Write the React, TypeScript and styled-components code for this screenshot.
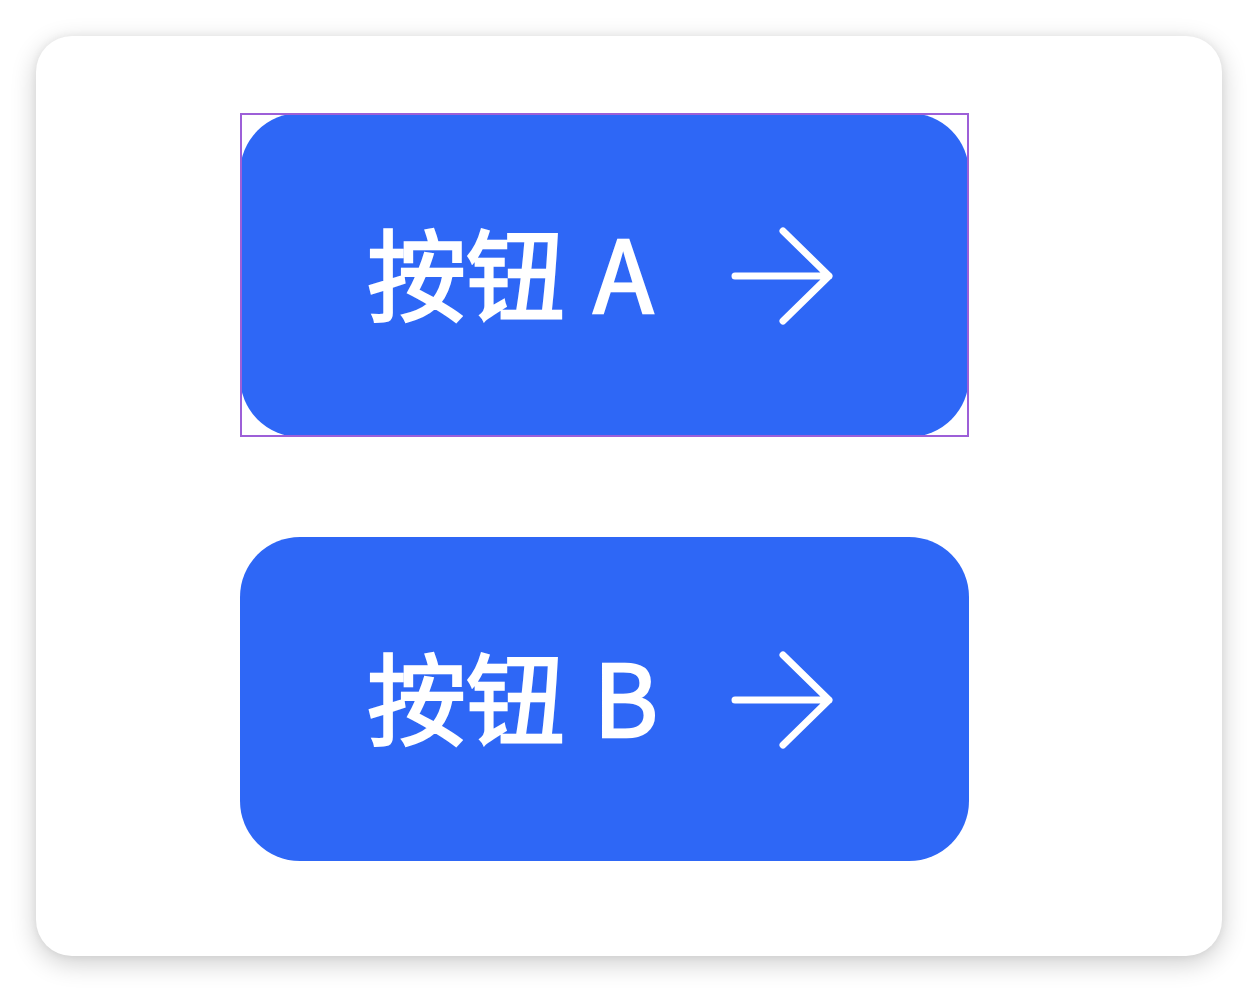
import React from 'react';
import styled, { createGlobalStyle } from 'styled-components';

const GlobalStyle = createGlobalStyle`
  html, body {
    margin: 0;
    padding: 0;
    background: #ffffff;
  }

  body {
    font-family: "Noto Sans CJK SC", "Noto Sans", sans-serif;
  }
`;

interface ButtonItem {
  label: string;
  selected?: boolean;
}

const BUTTONS: ButtonItem[] = [
  { label: '按钮 A', selected: true },
  { label: '按钮 B' },
];

const ArrowIcon: React.FC = () => (
  <svg width="106" height="100" viewBox="0 0 106 100" fill="none">
    <path
      d="M6 50H100M54 5L100 50L54 95"
      stroke="#ffffff"
      strokeWidth="7"
      strokeLinecap="round"
      strokeLinejoin="round"
    />
  </svg>
);

const App: React.FC = () => {
  return (
    <Page>
      <GlobalStyle />
      <Card>
        {BUTTONS.map((btn) => (
          <Frame key={btn.label} $selected={btn.selected}>
            <ActionButton>
              <Label>{btn.label}</Label>
              <ArrowIcon />
            </ActionButton>
          </Frame>
        ))}
      </Card>
    </Page>
  );
};

export default App;

const Page = styled.div`
  width: 1258px;
  height: 992px;
  padding: 36px;
  box-sizing: border-box;
`;

const Card = styled.div`
  width: 1186px;
  height: 920px;
  box-sizing: border-box;
  padding: 77px 0 0 204px;
  display: flex;
  flex-direction: column;
  align-items: flex-start;
  gap: 100px;
  background: #ffffff;
  border-radius: 36px;
  box-shadow: 0 7px 26px rgba(0, 0, 0, 0.2), 0 0 8px rgba(0, 0, 0, 0.06);
`;

/* square selection box drawn over the selected button */
const Frame = styled.div<{ $selected?: boolean }>`
  position: relative;
  width: 729px;
  height: 324px;
  display: flex;

  &::after {
    content: '';
    display: ${({ $selected }) => ($selected ? 'block' : 'none')};
    position: absolute;
    inset: 0;
    border: 2px solid #9d5fd8;
    pointer-events: none;
  }
`;

const ActionButton = styled.button`
  flex: 1;
  display: flex;
  align-items: center;
  justify-content: space-between;
  padding: 0 134px 0 127px;
  border: none;
  border-radius: 60px;
  background: #2e67f6;
  color: #ffffff;
  cursor: pointer;

  svg {
    flex-shrink: 0;
    margin-top: 2px;
  }
`;

const Label = styled.span`
  font-family: "Noto Sans CJK SC", "Noto Sans", sans-serif;
  font-size: 99px;
  font-weight: 400;
  -webkit-text-stroke: 2.4px #ffffff;
  line-height: 1;
  margin-bottom: 9px;
  word-spacing: 6px;
  white-space: pre;
`;
